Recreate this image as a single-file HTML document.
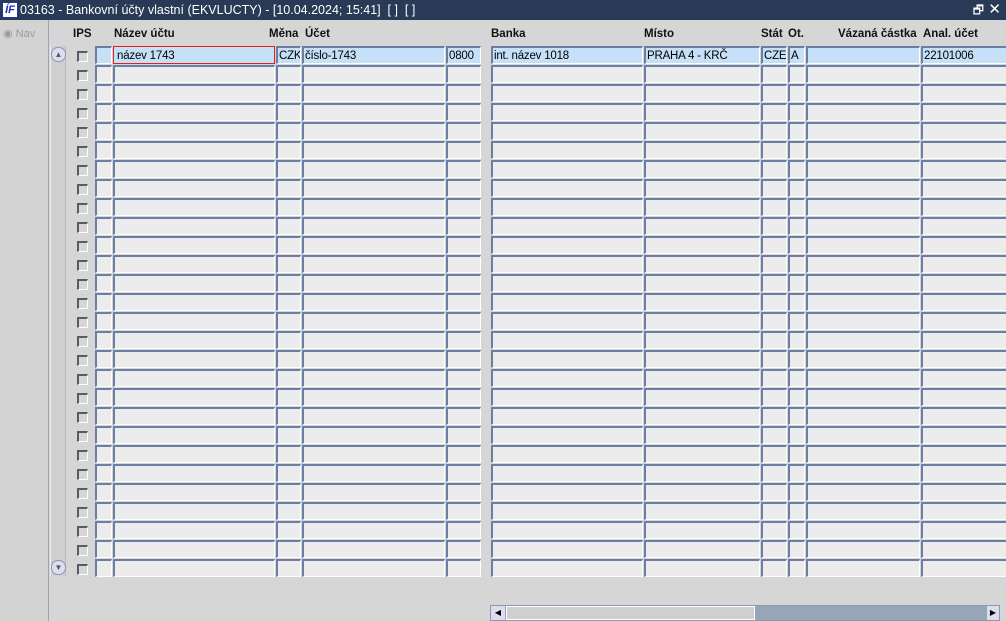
<!DOCTYPE html>
<html><head><meta charset="utf-8"><style>
*{margin:0;padding:0;box-sizing:border-box}
body{width:1006px;height:621px;overflow:hidden;background:#d6d6d6;font-family:"Liberation Sans",sans-serif;font-size:12px;position:relative}
#tb{position:absolute;left:0;top:0;width:1006px;height:20px;background:#283a56;color:#fff;font-size:12.5px;line-height:20px;padding-left:20px}
#logo{position:absolute;left:2px;top:2px;width:16px;height:16px;background:#fff;border:1px solid #2233aa;color:#1a2fb0;font-weight:bold;font-style:italic;font-size:11px;line-height:14px;text-align:center}
#nav{position:absolute;left:0;top:20px;width:49px;height:601px;background:#d3d3d3;border-right:1px solid #9aa6b8}
#navb{position:absolute;left:3px;top:7px;font-size:11px;color:#9a9a9a}
.h{position:absolute;top:28px;font-weight:bold;font-size:11.5px;color:#111}
.c{position:absolute;height:18px;background:#ececec;border-top:2px solid #6b7fa3;border-left:2px solid #6b7fa3;border-right:1px solid #fff;border-bottom:1px solid #fff;font-size:11.5px;line-height:16px;padding-left:1px;white-space:nowrap;overflow:hidden;letter-spacing:-0.2px}
.s{background:#c6e0f8}
.cb{position:absolute;left:77px;width:11px;height:11px;border-top:2px solid #555c66;border-left:2px solid #555c66;border-right:1px solid #fff;border-bottom:1px solid #fff;background:#d6d6d6}
#vs{position:absolute;left:50px;top:46px;width:16px;height:530px;background:#cfcfcf;border-left:1px solid #eee;border-right:1px solid #bbb}
.ar{position:absolute;left:0;width:15px;height:15px;border:1px solid #8899b0;border-radius:7px;background:#dde;font-size:8px;text-align:center;line-height:13px;color:#556}
#hs{position:absolute;left:490px;top:605px;width:510px;height:16px;background:#97a5b8;border:1px solid #8899b0}
#th{position:absolute;left:15px;top:0;width:249px;height:14px;background:#cfcfcf;border:1px solid #fff}
</style></head><body>
<div id="tb"><div id="logo">ÍF</div>03163 - Bankovní účty vlastní (EKVLUCTY) - [10.04.2024; 15:41] &nbsp;[ ] &nbsp;[ ]
<span style="position:absolute;right:22px;top:0;font-size:12px">🗗</span><span style="position:absolute;right:5px;top:0;font-size:15px">✕</span></div>
<div id="nav"><div id="navb">◉ Nav</div></div>
<div class="h" style="left:73px">IPS</div>
<div class="h" style="left:114px">Název účtu</div>
<div class="h" style="left:269px">Měna</div>
<div class="h" style="left:305px">Účet</div>
<div class="h" style="left:491px">Banka</div>
<div class="h" style="left:644px">Místo</div>
<div class="h" style="left:761px">Stát</div>
<div class="h" style="left:788px">Ot.</div>
<div class="h" style="left:838px">Vázaná částka</div>
<div class="h" style="left:923px">Anal. účet</div>
<div id="vs"><div class="ar" style="top:1px">▲</div><div class="ar" style="top:514px">▼</div></div>
<div id="rows"></div>
<div id="hs"><div style="position:absolute;left:0;top:0;width:14px;height:14px;background:#dde;font-size:8px;line-height:14px;text-align:center">◀</div><div id="th"></div><div style="position:absolute;right:0;top:0;width:12px;height:14px;background:#dde;font-size:8px;line-height:14px;text-align:center">▶</div></div>
<script>
var cols=[[95,17],[113,162],[276,25],[302,143],[446,35],[491,152],[644,116],[761,26],[788,17],[806,114],[921,90]];
var first=["","název 1743","CZK","číslo-1743","0800","int. název 1018","PRAHA 4 - KRČ","CZE","A","","22101006"];
var h="";
for(var r=0;r<28;r++){var y=46+r*19;
h+='<div class="cb" style="top:'+(y+5)+'px"></div>';
for(var i=0;i<cols.length;i++){var c=cols[i];var st='left:'+c[0]+'px;top:'+y+'px;width:'+c[1]+'px';
if(r==0&&i==1)st+=';border:1px solid #e02020;padding-left:3px;line-height:18px';
h+='<div class="c'+(r==0?' s':'')+'" style="'+st+'">'+(r==0?first[i]:'')+'</div>';}}
document.getElementById('rows').innerHTML=h;
</script>
</body></html>
